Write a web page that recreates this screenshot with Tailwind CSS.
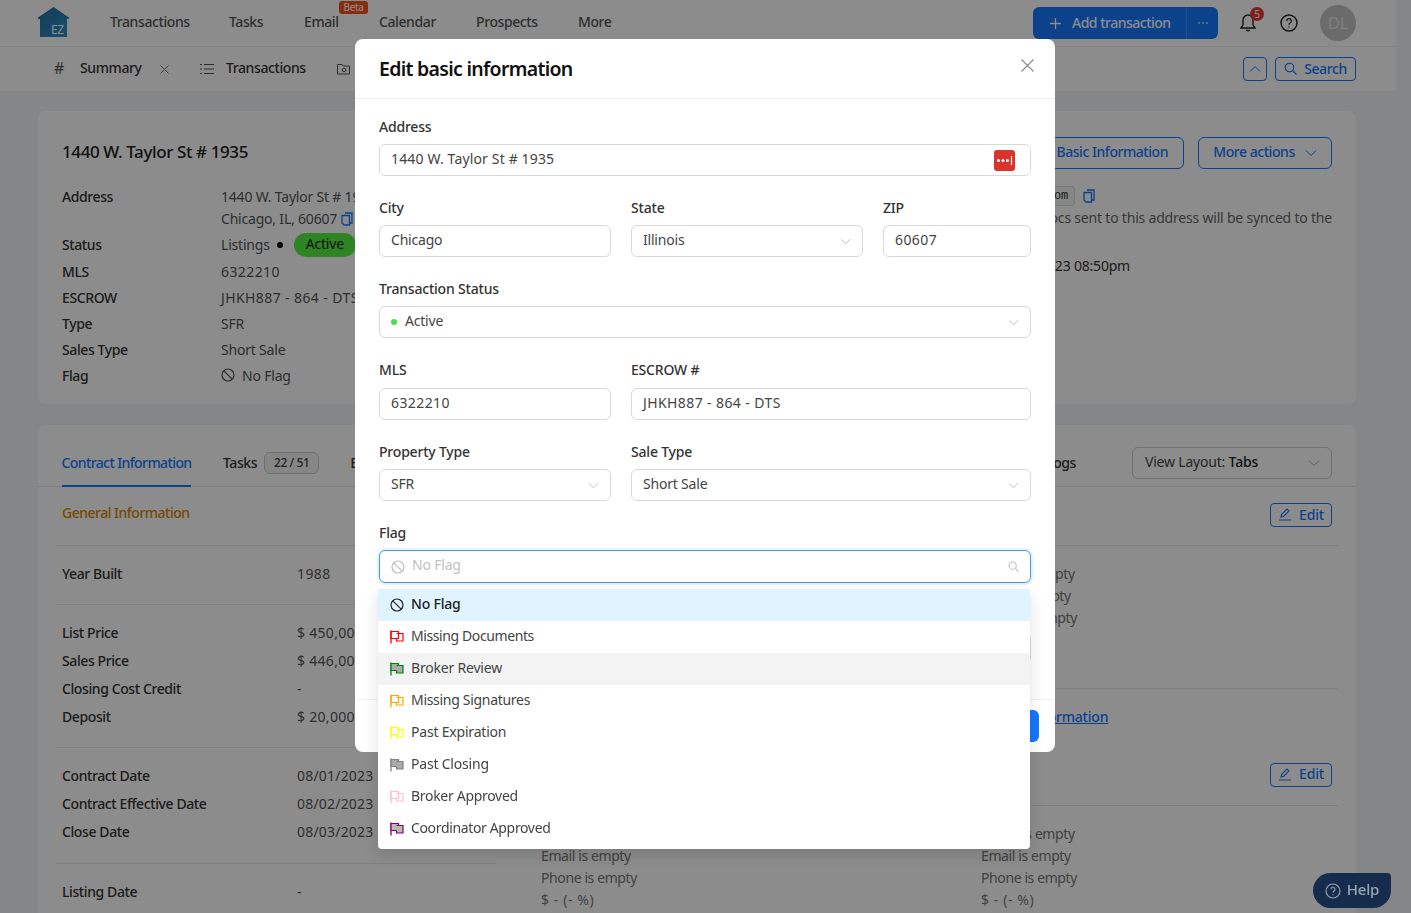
<!DOCTYPE html>
<html lang="en">
<head>
<meta charset="UTF-8">
<meta name="viewport" content="width=device-width, initial-scale=1.0">
<title>Edit basic information</title>
<script src="https://cdn.jsdelivr.net/npm/@tailwindcss/browser@4"></script>
</head>
<body class="font-['Noto_Sans',sans-serif] text-[14px] tracking-[-0.2px] text-[#1f2937] overflow-hidden">
<svg width="0" height="0" class="absolute">
  <symbol id="flag" viewBox="0 0 14 14">
    <path d="M1 .5V13.5" fill="none" stroke="currentColor" stroke-width="1.3"/>
    <path d="M1 1.5H8.5V8.5H1Z" fill="var(--f,none)" stroke="currentColor" stroke-width="1.2"/>
    <path d="M6.5 3.5H13V11H6.5V8.5" fill="var(--f,none)" stroke="currentColor" stroke-width="1.2"/>
  </symbol>
  <symbol id="noflag" viewBox="0 0 14 14">
    <circle cx="7" cy="7" r="6" fill="none" stroke="currentColor" stroke-width="1.2"/>
    <path d="M2.8 2.8L11.2 11.2" stroke="currentColor" stroke-width="1.2"/>
  </symbol>
  <symbol id="copy" viewBox="0 0 12 14">
    <path d="M4 1H11V11H9M1 3.5H8.5V13H3L1 11Z" fill="none" stroke="currentColor" stroke-width="1.3"/>
  </symbol>
  <symbol id="chev" viewBox="0 0 12 12">
    <path d="M1 3.5L6 8.5L11 3.5" fill="none" stroke="currentColor" stroke-width="1"/>
  </symbol>
  <symbol id="pen" viewBox="0 0 14 14">
    <path d="M1 13H13M3 10L3.5 7.5L9 2L11 4L5.5 9.5Z" fill="none" stroke="currentColor" stroke-width="1.1"/>
  </symbol>
</svg>

<!-- page behind the modal -->
<div class="h-[913px] bg-[#f1f4f8] font-medium tracking-[-0.4px] overflow-hidden">
  <div class="w-[1396px]">
    <header class="h-[47px] bg-white border-b border-[#f0f0f0] flex items-center pl-[38px] pr-[40px]">
      <div class="relative w-[31px] h-[31px] -mt-[2px]">
        <svg class="w-[31px] h-[31px]" viewBox="0 0 31 31">
          <defs><linearGradient id="logo" x1="0" y1="0" x2="1" y2="1"><stop offset="0" stop-color="#2a6ea0"/><stop offset="1" stop-color="#2b8ec8"/></linearGradient></defs>
          <path d="M15.5 0L31 10.5V12H29V30H2V12H0V10.5Z" fill="url(#logo)"/>
        </svg>
        <span class="absolute left-[13px] top-[15px] text-[12px] leading-[16px] font-normal text-white">EZ</span>
      </div>
      <nav class="flex items-center text-[#555] ml-[41px] pb-[3px]">
        <a class="w-[119px]">Transactions</a>
        <a class="w-[75px]">Tasks</a>
        <a class="w-[75px] relative">Email<span class="absolute left-[35px] -top-[10px] h-[13px] w-[29px] rounded-[3px] bg-[#f4511e] text-white text-[10px] leading-[13px] text-center font-normal">Beta</span></a>
        <a class="w-[97px]">Calendar</a>
        <a class="w-[102px]">Prospects</a>
        <a>More</a>
      </nav>
      <div class="ml-auto flex items-center">
        <div class="flex items-center w-[185px] h-[32px] rounded-[6px] bg-[#1677ff] text-white">
          <div class="w-[153px] flex items-center pl-[17px] gap-[11px] pb-[2px]">
            <svg class="w-[11px] h-[11px] mt-[2px]" viewBox="0 0 11 11"><path d="M5.5 0V11M0 5.5H11" stroke="currentColor" stroke-width="1.3"/></svg>
            <span class="tracking-[-0.5px]">Add transaction</span>
          </div>
          <span class="flex-1 h-full border-l border-white/20 flex items-center justify-center gap-[2px]">
            <i class="w-[2px] h-[2px] rounded-full bg-white/70"></i><i class="w-[2px] h-[2px] rounded-full bg-white/70"></i><i class="w-[2px] h-[2px] rounded-full bg-white/70"></i>
          </span>
        </div>
        <div class="relative ml-[22px] w-[16px] h-[20px]">
          <svg class="w-[16px] h-[20px]" viewBox="0 0 16 20"><path d="M1 15H15L13 12V7A5 5 0 0 0 3 7V12ZM6 17.5H10" fill="none" stroke="#222" stroke-width="1.4"/></svg>
          <span class="absolute left-[10px] -top-[6px] w-[14px] h-[14px] rounded-full bg-[#e53935] text-white text-[10px] leading-[14px] text-center font-normal">5</span>
        </div>
        <svg class="ml-[24px] w-[18px] h-[18px]" viewBox="0 0 18 18"><circle cx="9" cy="9" r="8" fill="none" stroke="#222" stroke-width="1.4"/><path d="M6.7 7a2.3 2.3 0 1 1 3.4 2c-.8.5-1.1.9-1.1 1.8M9 12.4v1.2" fill="none" stroke="#222" stroke-width="1.3"/></svg>
        <span class="ml-[22px] w-[36px] h-[36px] rounded-full bg-[#c4c4c4] text-[#e5e5e5] text-[17px] leading-[36px] text-center font-normal">DL</span>
      </div>
    </header>
    <div class="h-[44px] bg-white flex items-center pl-[54px] pr-[40px]">
      <span class="w-[26px] text-[#555] font-normal text-[16px] leading-none pb-[2px]">#</span>
      <span class="w-[80px] text-[#333] pb-[3px]">Summary</span>
      <svg class="w-[9px] h-[9px] mr-[31px] text-[#777]" viewBox="0 0 9 9"><path d="M.5.5L8.5 8.5M8.5.5L.5 8.5" stroke="currentColor"/></svg>
      <svg class="w-[14px] h-[12px] mr-[12px]" viewBox="0 0 14 12"><path d="M4 1.5H14M4 6H14M4 10.5H14M0 1.5H2M0 6H2M0 10.5H2" stroke="#555" stroke-width="1.1"/></svg>
      <span class="w-[111px] text-[#333] pb-[3px]">Transactions</span>
      <svg class="w-[13px] h-[12px]" viewBox="0 0 13 12"><path d="M.5 1.5H5L6 3H12.5V11H.5Z" fill="none" stroke="#555"/><circle cx="7" cy="7" r="1.8" fill="none" stroke="#555"/></svg>
      <button class="ml-auto w-[24px] h-[24px] rounded-[4px] border border-[#1677ff] text-[#1677ff] flex items-center justify-center"><svg class="w-[12px] h-[12px] rotate-180"><use href="#chev"/></svg></button>
      <button class="ml-[8px] w-[81px] h-[24px] rounded-[4px] border border-[#1677ff] text-[#1677ff] flex items-center justify-center gap-[7px] pb-[2px]">
        <svg class="w-[13px] h-[13px]" viewBox="0 0 13 13"><circle cx="5.5" cy="5.5" r="4.3" fill="none" stroke="currentColor" stroke-width="1.1"/><path d="M8.7 8.7L12.5 12.5" stroke="currentColor" stroke-width="1.1"/></svg>Search
      </button>
    </div>

    <main class="pl-[38px] pr-[40px] pt-[20px] flex flex-col gap-[21px]">
      <section class="h-[293px] bg-white rounded-[8px] px-[24px] pt-[26px] flex justify-between">
        <div>
          <h2 class="text-[17px] leading-[30px] mb-[19px] text-[#222] tracking-[-0.4px]">1440 W. Taylor St # 1935</h2>
          <div class="grid grid-cols-[159px_1fr] grid-rows-[45px_27px_repeat(5,26px)] items-center text-[#333]">
            <span class="self-start leading-[22px]">Address</span>
            <span class="self-start leading-[22px] font-normal text-[#555] tracking-[-0.2px]">1440 W. Taylor St # 1935<br><span class="inline-flex items-center gap-[4px]">Chicago, IL, 60607<svg class="w-[12px] h-[14px] text-[#1677ff]"><use href="#copy"/></svg></span></span>
            <span>Status</span>
            <span class="font-normal text-[#555] tracking-[-0.2px] flex items-center">Listings<i class="ml-[7px] w-[6px] h-[6px] rounded-full bg-black"></i><span class="ml-[11px] h-[24px] leading-[22px] px-[12px] rounded-full bg-[#54f03e] text-[#222]">Active</span></span>
            <span>MLS</span><span class="font-normal text-[#555] tracking-[0.4px]">6322210</span>
            <span>ESCROW</span><span class="font-normal text-[#555] tracking-[0.4px]">JHKH887 - 864 - DTS</span>
            <span>Type</span><span class="font-normal text-[#555] tracking-[-0.2px]">SFR</span>
            <span>Sales Type</span><span class="font-normal text-[#555] tracking-[-0.2px]">Short Sale</span>
            <span>Flag</span><span class="font-normal text-[#555] tracking-[-0.2px] flex items-center gap-[7px]"><svg class="w-[14px] h-[14px]"><use href="#noflag"/></svg>No Flag</span>
          </div>
        </div>
        <div class="w-[400px] flex flex-col items-end font-normal text-[#666] tracking-[-0.2px]">
          <div class="flex gap-[14px] font-medium tracking-[-0.45px] text-[#1677ff]">
            <button class="h-[32px] px-[15px] pb-[3px] rounded-[6px] border border-[#1677ff]">Edit Basic Information</button>
            <button class="w-[134px] h-[32px] pb-[3px] rounded-[6px] border border-[#1677ff] flex items-center justify-center gap-[10px]">More actions<svg class="w-[12px] h-[12px] mt-[2px]"><use href="#chev"/></svg></button>
          </div>
          <div class="mt-[17px] mr-[237px] flex items-center gap-[8px]"><span class="h-[20px] px-[6px] rounded-[3px] bg-[#f5f5f5] border border-[#ddd] font-['Liberation_Mono',monospace] text-[12px] leading-[18px] text-[#333]">deal@ez.com</span><svg class="w-[12px] h-[14px] text-[#1677ff]"><use href="#copy"/></svg></div>
          <p class="mt-[1px] leading-[22px]">Docs sent to this address will be synced to the</p>
          <p class="mt-[26px] mr-[202px] text-[#333]">08/03/2023 08:50pm</p>
        </div>
      </section>

      <section class="h-[520px] bg-white rounded-[8px]">
        <div class="h-[62px] border-b border-[#e8e8e8] px-[24px] pt-[14px] flex items-center">
          <a class="h-full w-[129px] flex items-center justify-center border-b-2 border-[#1677ff] text-[#1677ff] translate-y-[1px] whitespace-nowrap tracking-[-0.6px]">Contract Information</a>
          <a class="ml-[32px] text-[#333]">Tasks</a>
          <span class="ml-[7px] w-[55px] h-[22px] rounded-[6px] border border-[#ccc] bg-[#f5f5f5] text-[12px] leading-[20px] text-center text-[#444]">22 / 51</span>
          <a class="ml-[31px] text-[#333]">Emails</a>
          <a class="ml-auto mr-[56px] text-[#333]">Logs</a>
          <div class="w-[200px] h-[32px] rounded-[6px] border border-[#ccc] flex items-center justify-between pl-[12px] pr-[11px] font-normal text-[#444] tracking-[-0.2px]"><span class="pb-[2px]">View Layout: <b class="font-medium text-[#222]">Tabs</b></span><svg class="w-[12px] h-[12px] text-[#aaa]"><use href="#chev"/></svg></div>
        </div>
        <div class="h-[58px] px-[24px] flex items-center justify-between">
          <h3 class="text-[#d48806] mb-[8px] tracking-[-0.5px]">General Information</h3>
          <button class="w-[62px] h-[24px] mb-[2px] pb-[2px] rounded-[4px] border border-[#1677ff] text-[#1677ff] tracking-[-0.2px] flex items-center justify-center gap-[7px]"><svg class="w-[14px] h-[14px]"><use href="#pen"/></svg>Edit</button>
        </div>
        <div class="mx-[18px] grid grid-cols-[440px_440px_1fr] border-t border-[#e8e8e8]">
          <div class="text-[#333]">
            <div class="h-[59px] border-b border-[#e8e8e8] px-[6px] pb-[4px] flex items-center"><span class="w-[235px]">Year Built</span><span class="font-normal text-[#555] tracking-[0.4px]">1988</span></div>
            <div class="h-[143px] border-b border-[#e8e8e8] px-[6px] pt-[13px] grid grid-cols-[235px_1fr] auto-rows-[28px] items-center">
              <span>List Price</span><span class="font-normal text-[#555] tracking-[0.3px]">$ 450,000</span>
              <span>Sales Price</span><span class="font-normal text-[#555] tracking-[0.3px]">$ 446,000</span>
              <span>Closing Cost Credit</span><span class="font-normal text-[#555]">-</span>
              <span>Deposit</span><span class="font-normal text-[#555] tracking-[0.3px]">$ 20,000</span>
            </div>
            <div class="h-[116px] border-b border-[#e8e8e8] px-[6px] pt-[13px] grid grid-cols-[235px_1fr] auto-rows-[28px] items-center">
              <span>Contract Date</span><span class="font-normal text-[#555] tracking-[0.2px]">08/01/2023</span>
              <span>Contract Effective Date</span><span class="font-normal text-[#555] tracking-[0.2px]">08/02/2023</span>
              <span>Close Date</span><span class="font-normal text-[#555] tracking-[0.2px]">08/03/2023</span>
            </div>
            <div class="h-[59px] px-[6px] pb-[5px] flex items-center"><span class="w-[235px]">Listing Date</span><span class="font-normal text-[#555]">-</span></div>
          </div>
          <div class="pl-[45px] pt-[299px] font-normal text-[#777] leading-[22px] tracking-[-0.4px]">
            <p>Email is empty</p><p>Phone is empty</p><p class="tracking-[0.6px]">$ - (- %)</p>
          </div>
          <div class="font-normal text-[#777] leading-[22px] tracking-[-0.4px]">
            <div class="h-[143px] border-b border-[#e8e8e8] pt-[17px] pl-[45px]"><p>Name is empty</p><p>Email is empty</p><p>Phone is empty</p></div>
            <div class="h-[117px] border-b border-[#e8e8e8] relative pl-[45px]">
              <a class="absolute left-[52px] top-[17px] font-medium text-[#1677ff] underline whitespace-nowrap tracking-[-0.2px]">Other Information</a>
              <button class="absolute right-[6px] top-[74px] w-[62px] h-[24px] pb-[2px] rounded-[4px] border border-[#1677ff] text-[#1677ff] font-medium tracking-[-0.2px] flex items-center justify-center gap-[7px]"><svg class="w-[14px] h-[14px]"><use href="#pen"/></svg>Edit</button>
            </div>
            <div class="pt-[17px] pl-[45px]"><p>Name is empty</p><p>Email is empty</p><p>Phone is empty</p><p class="tracking-[0.6px]">$ - (- %)</p></div>
          </div>
        </div>
      </section>
    </main>
  </div>
</div>

<!-- overlay -->
<div class="fixed inset-0 bg-black/45"></div>

<button class="fixed left-[1313px] top-[873px] w-[78px] h-[35px] bg-[#152c4c] text-[#9aa5b5] rounded-l-[18px] rounded-br-[18px] rounded-tr-[4px] font-medium flex items-center justify-center gap-[6px] text-[15px] pb-[2px]">
  <svg class="w-[16px] h-[16px] mt-[2px]" viewBox="0 0 16 16"><circle cx="8" cy="8" r="7" fill="none" stroke="currentColor" stroke-width="1.1"/><path d="M6 6.3a2 2 0 1 1 3 1.7c-.7.4-1 .8-1 1.5M8 11.3v1" fill="none" stroke="currentColor" stroke-width="1.1"/></svg>Help
</button>

<!-- modal -->
<div class="fixed left-[355px] top-[39px] w-[700px] h-[713px] bg-white rounded-[8px] text-[#333]">
  <div class="h-[60px] border-b border-[#f0f0f0] rounded-t-[8px] pl-[24px] pr-[21px] flex items-center justify-between">
    <h2 class="text-[19.5px] font-semibold text-[#111] tracking-[-0.7px]">Edit basic information</h2>
    <svg class="w-[13px] h-[13px] -mt-[7px] text-[#888]" viewBox="0 0 13 13"><path d="M.5.5L12.5 12.5M12.5.5L.5 12.5" stroke="currentColor" stroke-width="1.1"/></svg>
  </div>
  <form class="pt-[16px] px-[24px] flex flex-col">
    <label class="block font-medium h-[29px] leading-[24px]">Address</label>
    <div class="h-[32px] w-[652px] rounded-[6px] border border-[#d9d9d9] pl-[11px] pr-[11px] flex items-center justify-between text-[#444]">
      <span class="pb-[3px] tracking-[0.15px]">1440 W. Taylor St # 1935</span>
      <svg class="w-[21px] h-[21px] mr-[4px]" viewBox="0 0 21 21"><rect width="21" height="21" rx="3" fill="#d9342c"/><circle cx="4.5" cy="10.5" r="1.5" fill="#fff"/><circle cx="9" cy="10.5" r="1.5" fill="#fff"/><circle cx="13.5" cy="10.5" r="1.5" fill="#fff"/><path d="M17.5 6V15" stroke="#fff" stroke-width="1.2"/></svg>
    </div>

    <div class="mt-[19px] grid grid-cols-[232px_232px_148px] gap-x-[20px]">
      <div><label class="block font-medium h-[30px] leading-[26px]">City</label><div class="h-[32px] rounded-[6px] border border-[#d9d9d9] px-[11px] pb-[3px] flex items-center text-[#444]">Chicago</div></div>
      <div><label class="block font-medium h-[30px] leading-[26px]">State</label><div class="h-[32px] rounded-[6px] border border-[#d9d9d9] px-[11px] flex items-center justify-between text-[#444]"><span class="pb-[3px]">Illinois</span><svg class="w-[11px] h-[11px] text-[#bbb]"><use href="#chev"/></svg></div></div>
      <div><label class="block font-medium h-[30px] leading-[26px]">ZIP</label><div class="h-[32px] rounded-[6px] border border-[#d9d9d9] px-[11px] pb-[3px] flex items-center text-[#444] tracking-[0.4px]">60607</div></div>
    </div>

    <label class="mt-[19px] block font-medium h-[30px] leading-[26px]">Transaction Status</label>
    <div class="h-[32px] rounded-[6px] border border-[#d9d9d9] px-[11px] flex items-center text-[#444]">
      <span class="w-[6px] h-[6px] rounded-full bg-[#4ade4a] mr-[8px]"></span><span class="pb-[3px]">Active</span><svg class="ml-auto w-[11px] h-[11px] text-[#bbb]"><use href="#chev"/></svg>
    </div>

    <div class="mt-[20px] grid grid-cols-[232px_400px] gap-x-[20px]">
      <div><label class="block font-medium h-[30px] leading-[24px]">MLS</label><div class="h-[32px] rounded-[6px] border border-[#d9d9d9] px-[11px] pb-[3px] flex items-center text-[#444] tracking-[0.4px]">6322210</div></div>
      <div><label class="block font-medium h-[30px] leading-[24px]">ESCROW #</label><div class="h-[32px] rounded-[6px] border border-[#d9d9d9] px-[11px] pb-[3px] flex items-center text-[#444] tracking-[0.4px]">JHKH887 - 864 - DTS</div></div>
    </div>

    <div class="mt-[19px] grid grid-cols-[232px_400px] gap-x-[20px]">
      <div><label class="block font-medium h-[30px] leading-[26px]">Property Type</label><div class="h-[32px] rounded-[6px] border border-[#d9d9d9] px-[11px] flex items-center justify-between text-[#444]"><span class="pb-[3px]">SFR</span><svg class="w-[11px] h-[11px] text-[#bbb]"><use href="#chev"/></svg></div></div>
      <div><label class="block font-medium h-[30px] leading-[26px]">Sale Type</label><div class="h-[32px] rounded-[6px] border border-[#d9d9d9] px-[11px] flex items-center justify-between text-[#444]"><span class="pb-[3px]">Short Sale</span><svg class="w-[11px] h-[11px] text-[#bbb]"><use href="#chev"/></svg></div></div>
    </div>

    <label class="mt-[19px] block font-medium h-[30px] leading-[26px]">Flag</label>
    <div class="h-[33px] rounded-[6px] border border-[#4096ff] shadow-[0_0_0_2px_rgba(5,145,255,0.1)] px-[11px] flex items-center text-[#bfbfbf]">
      <svg class="w-[14px] h-[14px] mr-[7px]"><use href="#noflag"/></svg><span class="pb-[4px]">No Flag</span>
      <svg class="ml-auto w-[11px] h-[11px]" viewBox="0 0 13 13"><circle cx="5.5" cy="5.5" r="4.3" fill="none" stroke="currentColor" stroke-width="1.3"/><path d="M8.7 8.7L12.5 12.5" stroke="currentColor" stroke-width="1.3"/></svg>
    </div>
    <div class="mt-[50px] h-[30px] rounded-[6px] border border-[#d9d9d9]"></div>
  </form>
  <div class="absolute left-0 right-0 top-[660px] h-[53px] border-t border-[#f0f0f0] pr-[16px] pt-[10px] flex justify-end">
    <button class="w-[100px] h-[32px] rounded-[6px] bg-[#1677ff] text-white font-medium">Save</button>
  </div>

  <!-- flag dropdown -->
  <ul class="absolute left-[23px] top-[550px] w-[652px] h-[260px] bg-white rounded-b-[4px] shadow-[0_6px_16px_rgba(0,0,0,0.12)] text-[#444]">
    <li class="h-[32px] px-[12px] flex items-center gap-[7px] bg-[#e0f4ff] font-medium text-[#222]"><svg class="w-[14px] h-[14px]"><use href="#noflag"/></svg><span class="pb-[3px]">No Flag</span></li>
    <li class="h-[32px] px-[12px] flex items-center gap-[7px]"><svg class="w-[14px] h-[14px] text-[#ff0000]"><use href="#flag"/></svg><span class="pb-[3px] tracking-[-0.4px]">Missing Documents</span></li>
    <li class="h-[32px] px-[12px] flex items-center gap-[7px] bg-[#f3f3f3]"><svg class="w-[14px] h-[14px] text-[#008000] [--f:#aaa]"><use href="#flag"/></svg><span class="pb-[3px]">Broker Review</span></li>
    <li class="h-[32px] px-[12px] flex items-center gap-[7px]"><svg class="w-[14px] h-[14px] text-[#ffa500]"><use href="#flag"/></svg><span class="pb-[3px] tracking-[-0.3px]">Missing Signatures</span></li>
    <li class="h-[32px] px-[12px] flex items-center gap-[7px]"><svg class="w-[14px] h-[14px] text-[#ffff00]"><use href="#flag"/></svg><span class="pb-[3px]">Past Expiration</span></li>
    <li class="h-[32px] px-[12px] flex items-center gap-[7px]"><svg class="w-[14px] h-[14px] text-[#808080] [--f:#aaa]"><use href="#flag"/></svg><span class="pb-[3px]">Past Closing</span></li>
    <li class="h-[32px] px-[12px] flex items-center gap-[7px]"><svg class="w-[14px] h-[14px] text-[#ffc0cb]"><use href="#flag"/></svg><span class="pb-[3px] tracking-[-0.3px]">Broker Approved</span></li>
    <li class="h-[32px] px-[12px] flex items-center gap-[7px]"><svg class="w-[14px] h-[14px] text-[#800080] [--f:#bba]"><use href="#flag"/></svg><span class="pb-[3px] tracking-[-0.35px]">Coordinator Approved</span></li>
  </ul>
</div>
</body>
</html>
